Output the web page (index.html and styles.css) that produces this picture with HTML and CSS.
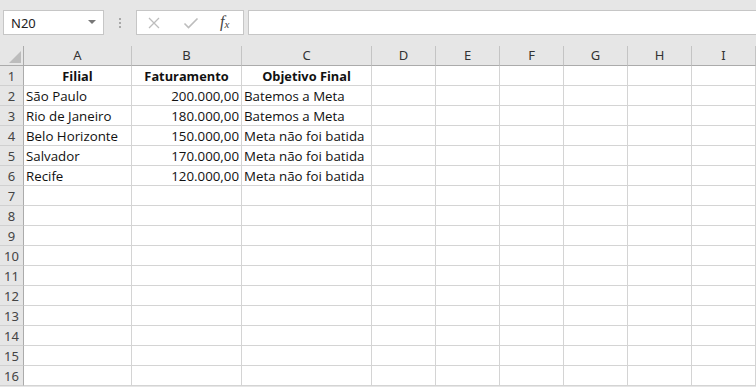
FILE: index.html
```html
<!DOCTYPE html>
<html lang="pt-BR">
<head>
  <meta charset="UTF-8">
  <title>Planilha - Faturamento</title>
  <link rel="stylesheet" href="styles.css">
</head>
<body>
  <div class="formula-bar">
    <div class="name-box">
      <span>N20</span>
      <span class="caret"></span>
    </div>
    <div class="grip"><i></i><i></i><i></i></div>
    <div class="fx-buttons">
      <svg class="btn" width="14" height="14" viewBox="0 0 14 14"><path d="M2 2 L12 12 M12 2 L2 12" stroke="#bdbdbd" stroke-width="1.3" fill="none"/></svg>
      <svg class="btn" width="16" height="14" viewBox="0 0 16 14"><path d="M1.5 7.5 L5.5 11.5 L14.5 2.5" stroke="#bdbdbd" stroke-width="1.6" fill="none"/></svg>
      <span class="fx">f<sub>x</sub></span>
    </div>
    <div class="formula-input"></div>
  </div>

  <div class="sheet" id="sheet"></div>

  <script>
    // Build the grid: header row + 16 rows
    const cols = ["A", "B", "C", "D", "E", "F", "G", "H", "I"];
    const data = [
      ["Filial", "Faturamento", "Objetivo Final"],
      ["São Paulo", "200.000,00", "Batemos a Meta"],
      ["Rio de Janeiro", "180.000,00", "Batemos a Meta"],
      ["Belo Horizonte", "150.000,00", "Meta não foi batida"],
      ["Salvador", "170.000,00", "Meta não foi batida"],
      ["Recife", "120.000,00", "Meta não foi batida"]
    ];
    const sheet = document.getElementById("sheet");
    let html = '<div class="corner"><span></span></div>';
    cols.forEach(c => { html += `<div class="col-head">${c}</div>`; });
    for (let r = 1; r <= 16; r++) {
      html += `<div class="row-head">${r}</div>`;
      const row = data[r - 1] || [];
      cols.forEach((c, i) => {
        let cls = "cell";
        if (r === 1 && i < 3) cls += " bold";
        if (i === 1 && r > 1) cls += " num";
        html += `<div class="${cls}">${row[i] || ""}</div>`;
      });
    }
    sheet.innerHTML = html;
  </script>
</body>
</html>
```
FILE: styles.css
```css
body {
  margin: 0;
  background-color: #e6e6e6;
  font-family: "Noto Sans", Arial, sans-serif;
  overflow: hidden;
}
.formula-bar {
  display: flex;
  align-items: center;
  height: 25px;
  padding: 10px 0 11px 3px;
}
.name-box {
  width: 101px;
  height: 25px;
  box-sizing: border-box;
  background: white;
  border: 1px solid #c6c6c6;
  display: flex;
  align-items: center;
  justify-content: space-between;
  padding: 0 7px 0 7px;
  font-size: 13px;
  color: #222;
}
.caret {
  width: 0;
  height: 0;
  border-left: 4px solid transparent;
  border-right: 4px solid transparent;
  border-top: 4px solid #777;
  margin-top: -2px;
}
.grip {
  width: 32px;
  display: flex;
  flex-direction: column;
  align-items: center;
  gap: 2px;
}
.grip i {
  width: 2px;
  height: 2px;
  background: #a8a8a8;
}
.fx-buttons {
  width: 108px;
  height: 25px;
  box-sizing: border-box;
  background: white;
  border: 1px solid #c6c6c6;
  display: flex;
  align-items: center;
  padding-left: 10px;
}
.fx-buttons .btn {
  margin-right: 22px;
}
.fx-buttons .btn + .btn {
  margin-right: 21px;
}
.fx {
  font-family: "Liberation Serif", serif;
  font-style: italic;
  font-size: 16px;
  color: #444;
  margin-top: -2px;
}
.fx sub {
  font-size: 11px;
  vertical-align: -1px;
}
.formula-input {
  flex: 1;
  height: 25px;
  box-sizing: border-box;
  margin-left: 4px;
  background: white;
  border: 1px solid #c6c6c6;
  border-right: none;
}
.sheet {
  display: grid;
  grid-template-columns: 24px 108px 110px 130px repeat(6, 64px);
  grid-template-rows: 20px repeat(16, 20px);
  background: white;
}
.sheet > div {
  box-sizing: border-box;
  border-right: 1px solid #d4d4d4;
  border-bottom: 1px solid #d4d4d4;
  white-space: nowrap;
  overflow: visible;
}
.corner {
  background: #e6e6e6;
  position: relative;
  border-bottom: 1px solid #ababab !important;
  border-right: 1px solid #ababab !important;
}
.corner span {
  position: absolute;
  right: 2px;
  bottom: 2px;
  width: 0;
  height: 0;
  border-left: 12px solid transparent;
  border-bottom: 12px solid #bcbcbc;
}
.col-head {
  background: #e6e6e6;
  border-bottom: 1px solid #ababab !important;
  border-right: 1px solid #c4c4c4 !important;
  text-align: center;
  font-size: 13px;
  line-height: 19px;
  color: #333;
}
.row-head {
  background: #e6e6e6;
  border-right: 1px solid #ababab !important;
  border-bottom: 1px solid #d0d0d0 !important;
  text-align: center;
  font-size: 13px;
  line-height: 20px;
  color: #444;
}
.cell {
  font-family: "Open Sans", Arial, sans-serif;
  font-size: 13.3px;
  line-height: 20px;
  padding: 0 2px;
  color: #111;
}
.cell.bold {
  font-size: 12.8px;
  font-weight: bold;
  text-align: center;
}
.cell.num {
  text-align: right;
}
```
